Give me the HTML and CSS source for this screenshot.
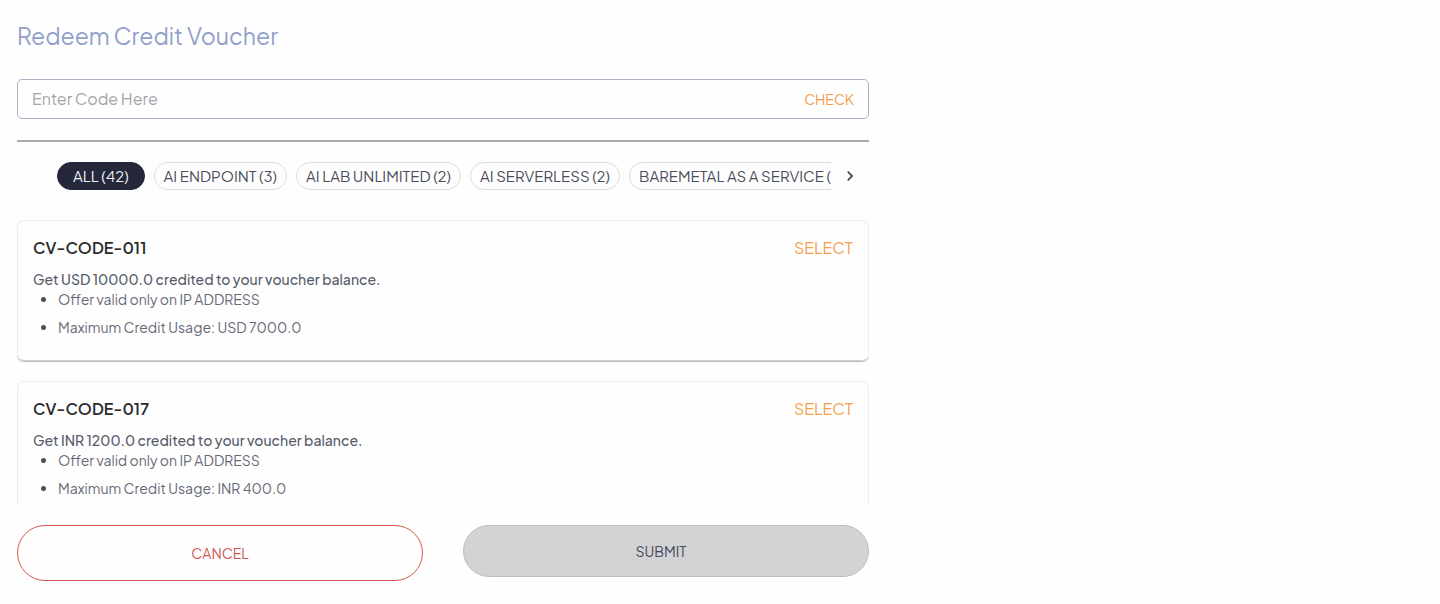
FILE: index.html
```html
<!DOCTYPE html>
<html lang="en">
<head>
<meta charset="utf-8">
<meta name="viewport" content="width=device-width, initial-scale=1">
<title>Redeem Credit Voucher</title>
<link rel="stylesheet" href="styles.css">
</head>
<body>
<main class="panel">
  <h1 class="title">Redeem Credit Voucher</h1>
  <form class="code-form">
    <input class="code-input" type="text" placeholder="Enter Code Here" aria-label="Voucher code">
    <button class="link-button check" type="button">CHECK</button>
  </form>
  <hr class="divider">
  <nav class="filters" aria-label="Voucher categories">
    <div class="chips">
      <button class="chip chip-active" type="button">ALL (42)</button>
      <button class="chip" type="button">AI ENDPOINT (3)</button>
      <button class="chip" type="button">AI LAB UNLIMITED (2)</button>
      <button class="chip" type="button">AI SERVERLESS (2)</button>
      <button class="chip" type="button">BAREMETAL AS A SERVICE (2)</button>
    </div>
    <button class="next" type="button" aria-label="Next categories">
      <svg width="20" height="20" viewBox="0 0 24 24" fill="#3f424a"><path d="M10 6 8.590 7.410 13.170 12l-4.580 4.590L10 18l6-6z"/></svg>
    </button>
  </nav>
  <section class="vouchers" aria-label="Vouchers">
    <article class="card">
      <header class="card-head">
        <h2 class="code">CV-CODE-011</h2>
        <button class="link-button select" type="button">SELECT</button>
      </header>
      <p class="offer">Get USD 10000.0 credited to your voucher balance.</p>
      <ul class="terms">
        <li>Offer valid only on IP ADDRESS</li>
        <li>Maximum Credit Usage: USD 7000.0</li>
      </ul>
    </article>
    <article class="card">
      <header class="card-head">
        <h2 class="code">CV-CODE-017</h2>
        <button class="link-button select" type="button">SELECT</button>
      </header>
      <p class="offer">Get INR 1200.0 credited to your voucher balance.</p>
      <ul class="terms">
        <li>Offer valid only on IP ADDRESS</li>
        <li>Maximum Credit Usage: INR 400.0</li>
      </ul>
    </article>
  </section>
  <footer class="actions">
    <button class="action cancel" type="button">CANCEL</button>
    <button class="action submit" type="button" disabled>SUBMIT</button>
  </footer>
</main>
</body>
</html>
```
FILE: styles.css
```css
* {
  box-sizing: border-box;
}

body {
  margin: 0;
  padding: 0 17px;
  background: #fefefe;
  color: #565c6a;
  font-family: "Plus Jakarta Sans", Inter, sans-serif;
  font-size: 14px;
  line-height: 20px;
}

button,
input {
  font: inherit;
}

button {
  cursor: pointer;
}

.panel {
  display: flex;
  flex-direction: column;
  width: 60.6%;
  height: 100vh;
  padding: 20px 0 23px;
}

.title {
  margin: 0 0 27px;
  color: #919fcb;
  font-size: 23px;
  font-weight: 400;
  line-height: 32px;
}

.code-form {
  display: flex;
  align-items: center;
  flex: none;
  height: 40px;
  padding: 0 14px;
  border: 1px solid #abb2c4;
  border-radius: 5px;
}

.code-input {
  flex: 1;
  min-width: 0;
  padding: 0;
  border: 0;
  outline: 0;
  background: transparent;
  font-size: 16px;
}

.code-input::placeholder {
  color: #a5a5a8;
  opacity: 1;
}

.link-button {
  padding: 0;
  border: 0;
  background: none;
  color: #f3a04b;
}

.divider {
  flex: none;
  width: 100%;
  height: 2px;
  margin: 21px 0 20px;
  border: 0;
  background: #aaa9af;
}

.filters {
  display: flex;
  align-items: center;
  flex: none;
  padding-left: 40px;
}

.chips {
  display: flex;
  flex: 1;
  gap: 9px;
  min-width: 0;
  overflow: hidden;
}

.chip {
  flex: none;
  height: 28px;
  padding: 0 9px;
  border: 1px solid #dcdcdf;
  border-radius: 14px;
  background: #fefefe;
  color: #4a4e5b;
  font-size: 15px;
  white-space: nowrap;
}

.chip-active {
  padding: 0 15px;
  border-color: #24283a;
  background: #24283a;
  color: #f2f2f4;
}

.next {
  display: grid;
  place-items: center;
  width: 38px;
  height: 28px;
  padding: 0;
  border: 0;
  background: none;
}

.vouchers {
  flex: 1;
  min-height: 0;
  margin-top: 30px;
  overflow: hidden;
}

.card {
  height: 141px;
  margin-bottom: 20px;
  padding: 15px;
  border: 1px solid #ededee;
  border-bottom-color: #d0d0d2;
  border-radius: 7px;
  box-shadow: 0 1px 1px #b8b8ba;
}

.card-head {
  display: flex;
  align-items: center;
  justify-content: space-between;
  height: 24px;
  margin-bottom: 9px;
}

.code {
  margin: 0;
  color: #2b2b2d;
  font-size: 16px;
  font-weight: 600;
}

.select {
  font-size: 16px;
}

.offer {
  margin: 0;
  font-weight: 500;
}

.terms {
  display: flex;
  flex-direction: column;
  gap: 8px;
  margin: 0;
  padding-left: 25px;
  color: #666a76;
}

.terms li::marker {
  color: #4a4e5b;
}

.actions {
  display: grid;
  grid-template-columns: 1fr 1fr;
  align-items: start;
  gap: 40px;
  flex: none;
  padding-top: 20px;
}

.action {
  height: 56px;
  border: 1px solid #d0574c;
  border-radius: 28px;
  background: #fefefe;
  color: #cd5a50;
}

.submit {
  height: 52px;
  padding-right: 16px;
  border-color: #bdbdbf;
  background: #d3d3d5;
  color: #444857;
  cursor: default;
}
```
